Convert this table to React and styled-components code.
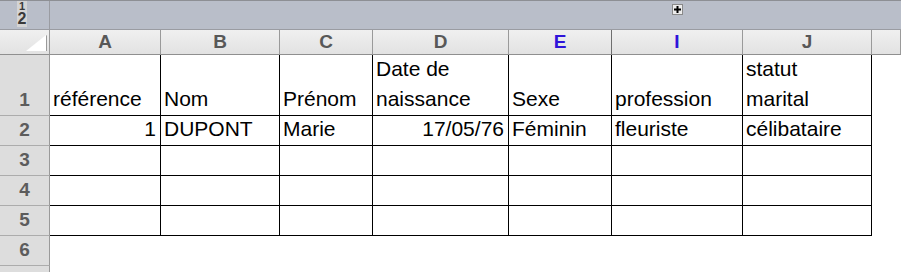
import React from 'react';
import styled, { createGlobalStyle, css } from 'styled-components';

const GlobalStyle = createGlobalStyle`
  html, body {
    margin: 0;
    padding: 0;
    background: #ffffff;
    overflow: hidden;
  }
`;

const COLS = '50px 111px 119px 93px 136px 103px 131px 129px 1fr';

const columns = [
  { letter: 'A' },
  { letter: 'B' },
  { letter: 'C' },
  { letter: 'D' },
  { letter: 'E', selected: true },
  { letter: 'I', selected: true },
  { letter: 'J' },
];

// contenu des lignes (cells vides = cases encadrées sans texte)
const rows = [
  {
    n: 1,
    h: 61,
    boxed: true,
    cells: [
      ['référence'],
      ['Nom'],
      ['Prénom'],
      ['Date de', 'naissance'],
      ['Sexe'],
      ['profession'],
      ['statut', 'marital'],
    ],
  },
  {
    n: 2,
    h: 30,
    boxed: true,
    cells: [
      { text: '1', right: true },
      ['DUPONT'],
      ['Marie'],
      { text: '17/05/76', right: true },
      ['Féminin'],
      ['fleuriste'],
      ['célibataire'],
    ],
  },
  { n: 3, h: 30, boxed: true, cells: [] },
  { n: 4, h: 30, boxed: true, cells: [] },
  { n: 5, h: 30, boxed: true, cells: [] },
  { n: 6, h: 30, boxed: false, cells: [] },
  { n: 7, h: 30, boxed: false, cells: [] },
];

const Page = styled.div`
  width: 901px;
  height: 272px;
  overflow: hidden;
  display: flex;
  flex-direction: column;
  font-family: 'Liberation Sans', Arial, sans-serif;
`;

// barre du plan (niveaux de regroupement)
const OutlineBar = styled.div`
  display: grid;
  grid-template-columns: ${COLS};
  height: 30px;
  box-sizing: border-box;
  background: #b9bec9;
  border-top: 1px solid #8d8f94;
  border-bottom: 1px solid #9a9ca2;
  flex-shrink: 0;
`;

const LevelArea = styled.div`
  border-right: 1px solid #9a9ca2;
  display: flex;
  flex-direction: column;
  align-items: flex-start;
  padding-left: 17px;
`;

const LevelButton = styled.div`
  width: 10px;
  height: ${p => p.$h}px;
  background: #d4d4d4;
  color: #3a3a3a;
  font-size: ${p => p.$size}px;
  font-weight: bold;
  line-height: ${p => p.$h}px;
  text-align: center;
  overflow: hidden;
`;

const GroupSlot = styled.div`
  grid-column: 7;
  padding: 3px 0 0 60px;
`;

const PlusButton = styled.div`
  width: 11px;
  height: 11px;
  box-sizing: border-box;
  border: 1px solid #8a8a8a;
  background: #ececec;
  display: flex;
  align-items: center;
  justify-content: center;
`;

const Sheet = styled.div`
  display: grid;
  grid-template-columns: ${COLS};
  grid-template-rows: 25px ${rows.map(r => `${r.h}px`).join(' ')};
`;

const headerBg = css`
  background: linear-gradient(#f0f0f0, #e2e2e2);
`;

const Corner = styled.div`
  ${headerBg};
  border-right: 1px solid #9a9a9a;
  border-bottom: 1px solid #8f8f8f;
  position: relative;
  box-sizing: border-box;
`;

const CornerTriangle = styled.div`
  position: absolute;
  right: 3px;
  bottom: 3px;
  width: 0;
  height: 0;
  border-left: 20px solid transparent;
  border-bottom: 16px solid #ffffff;
  filter: drop-shadow(1px 0 0 #9a9a9a);
`;

const ColHead = styled.div`
  ${headerBg};
  box-sizing: border-box;
  border-right: 1px solid ${p => (p.$dark ? '#6f6f6f' : '#9a9a9a')};
  border-bottom: 1px solid #8f8f8f;
  text-align: center;
  font-size: 19px;
  font-weight: bold;
  line-height: 24px;
  color: ${p => (p.$selected ? '#2f14d9' : '#585858')};
`;

const RowHead = styled.div`
  background: #dddddd;
  box-sizing: border-box;
  border-right: 1px solid #9a9a9a;
  border-bottom: 1px solid #acacac;
  display: flex;
  align-items: flex-end;
  justify-content: center;
  font-size: 19px;
  font-weight: bold;
  line-height: 30px;
  color: #5c5c5c;
`;

const Cell = styled.div`
  box-sizing: border-box;
  display: flex;
  flex-direction: column;
  justify-content: flex-end;
  align-items: ${p => (p.$right ? 'flex-end' : 'flex-start')};
  padding: 0 4px 1px 3px;
  font-size: 21px;
  line-height: 30px;
  color: #000000;
  white-space: nowrap;
  ${p =>
    p.$boxed &&
    css`
      border-right: 1px solid #000000;
      border-bottom: 1px solid #000000;
    `}
`;

const Plus = () => (
  <svg width="7" height="7" viewBox="0 0 7 7">
    <path d="M2.5 0h2v2.5H7v2H4.5V7h-2V4.5H0v-2h2.5z" fill="#000" />
  </svg>
);

const renderCell = (row, col) => {
  const c = row.cells[col];
  if (!c) return <Cell key={col} $boxed={row.boxed} />;
  if (Array.isArray(c)) {
    return (
      <Cell key={col} $boxed={row.boxed}>
        {c.map(line => (
          <span key={line}>{line}</span>
        ))}
      </Cell>
    );
  }
  return (
    <Cell key={col} $boxed={row.boxed} $right={c.right}>
      <span>{c.text}</span>
    </Cell>
  );
};

export default function App() {
  return (
    <>
      <GlobalStyle />
      <Page>
        <OutlineBar>
          <LevelArea>
            <LevelButton $h={10} $size={11}>1</LevelButton>
            <LevelButton $h={16} $size={16}>2</LevelButton>
          </LevelArea>
          <GroupSlot>
            <PlusButton>
              <Plus />
            </PlusButton>
          </GroupSlot>
        </OutlineBar>
        <Sheet>
          <Corner>
            <CornerTriangle />
          </Corner>
          {columns.map((c, i) => (
            <ColHead key={c.letter} $selected={c.selected} $dark={i === 4}>
              {c.letter}
            </ColHead>
          ))}
          <ColHead />
          {rows.map(row => (
            <React.Fragment key={row.n}>
              <RowHead>{row.n}</RowHead>
              {columns.map((_, i) => renderCell(row, i))}
              <Cell />
            </React.Fragment>
          ))}
        </Sheet>
      </Page>
    </>
  );
}
